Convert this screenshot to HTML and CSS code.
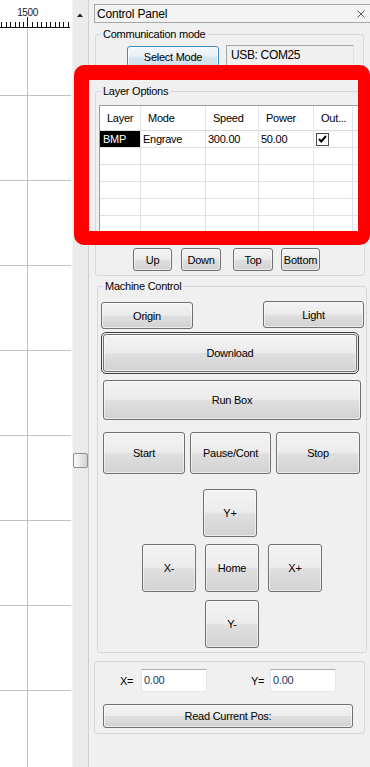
FILE: index.html
```html
<!DOCTYPE html>
<html>
<head>
<meta charset="utf-8">
<title>Control Panel</title>
<link rel="stylesheet" href="styles.css">
</head>
<body>
<div class="canvas">
  <svg width="72" height="767" viewBox="0 0 72 767">
    <g stroke="#c3c3c3" stroke-width="1">
      <path d="M27.5 28V767"/>
      <path d="M0 95.5H71M0 180.5H71M0 265.5H71M0 350.5H71M0 435.5H71M0 520.5H71M0 605.5H71M0 690.5H71"/>
    </g>
    <g stroke="#111" stroke-width="1">
      <path d="M0 27.5H70"/>
      <path d="M1.5 22V27M6.5 22V27M10.5 22V27M15.5 22V27M19.5 22V27M23.5 22V27M27.5 17V27M32.5 22V27M37.5 22V27M41.5 22V27M46.5 22V27M50.5 22V27M55.5 22V27M59.5 22V27M63.5 22V27M68.5 22V27"/>
    </g>
    <text x="27.5" y="16" class="ruler-label" text-anchor="middle">1500</text>
  </svg>
</div>
<div class="vscroll">
  <svg class="arrow-up" width="6" height="4" viewBox="0 0 6 4"><path d="M0 4L3 0.5L6 4Z" fill="#222"/></svg>
  <div class="thumb"></div>
</div>
<div class="panel">
  <div class="titlebar">
    <span>Control Panel</span>
    <svg width="8" height="8" viewBox="0 0 8 8"><path d="M0.5 0.5L7.5 7.5M7.5 0.5L0.5 7.5" stroke="#555" stroke-width="1"/></svg>
  </div>

  <fieldset class="group g-comm">
    <legend>Communication mode</legend>
    <div class="comm-row">
      <button class="btn btn-focus select-mode">Select Mode</button>
      <div class="port">USB: COM25</div>
    </div>
  </fieldset>

  <fieldset class="group g-layer">
    <legend>Layer Options</legend>
    <div class="grid-wrap">
      <div class="grid">
        <div class="cell hd">Layer</div>
        <div class="cell hd">Mode</div>
        <div class="cell hd">Speed</div>
        <div class="cell hd">Power</div>
        <div class="cell hd">Out...</div>
        <div class="cell hd last"></div>

        <div class="cell sel">BMP</div>
        <div class="cell">Engrave</div>
        <div class="cell">300.00</div>
        <div class="cell">50.00</div>
        <div class="cell"><span class="check"><svg width="11" height="11" viewBox="0 0 11 11"><path d="M2 5L4.3 7.5L9 2" stroke="#000" stroke-width="2" fill="none"/></svg></span></div>
        <div class="cell last"></div>

        <div class="cell"></div><div class="cell"></div><div class="cell"></div><div class="cell"></div><div class="cell"></div><div class="cell last"></div>
        <div class="cell"></div><div class="cell"></div><div class="cell"></div><div class="cell"></div><div class="cell"></div><div class="cell last"></div>
        <div class="cell"></div><div class="cell"></div><div class="cell"></div><div class="cell"></div><div class="cell"></div><div class="cell last"></div>
        <div class="cell"></div><div class="cell"></div><div class="cell"></div><div class="cell"></div><div class="cell"></div><div class="cell last"></div>
        <div class="cell"></div><div class="cell"></div><div class="cell"></div><div class="cell"></div><div class="cell"></div><div class="cell last"></div>
        <div class="cell"></div><div class="cell"></div><div class="cell"></div><div class="cell"></div><div class="cell"></div><div class="cell last"></div>
      </div>
    </div>
    <div class="order-row">
      <button class="btn b-up">Up</button>
      <button class="btn b-down">Down</button>
      <button class="btn b-top">Top</button>
      <button class="btn b-bottom">Bottom</button>
    </div>
  </fieldset>

  <fieldset class="group g-machine">
    <legend>Machine Control</legend>
    <div class="row-ol">
      <button class="btn b-origin">Origin</button>
      <button class="btn b-light">Light</button>
    </div>
    <button class="btn b-download">Download</button>
    <button class="btn b-runbox">Run Box</button>
    <div class="row-ssp">
      <button class="btn b-start">Start</button>
      <button class="btn b-pause">Pause/Cont</button>
      <button class="btn b-stop">Stop</button>
    </div>
    <div class="pad-row pad-top"><button class="btn pad b-yplus">Y+</button></div>
    <div class="pad-row pad-mid">
      <button class="btn pad">X-</button>
      <button class="btn pad">Home</button>
      <button class="btn pad">X+</button>
    </div>
    <div class="pad-row pad-bot"><button class="btn pad">Y-</button></div>
  </fieldset>

  <div class="group g-pos">
    <div class="pos-row">
      <span class="lbl lbl-x">X=</span>
      <div class="field">0.00</div>
      <span class="lbl lbl-y">Y=</span>
      <div class="field">0.00</div>
    </div>
    <button class="btn b-read">Read Current Pos:</button>
  </div>
</div>
<div class="highlight"></div>
</body>
</html>
```

FILE: styles.css
```css
* { box-sizing: border-box; }

html, body {
  margin: 0;
  padding: 0;
}

body {
  position: relative;
  width: 370px;
  height: 767px;
  overflow: hidden;
  display: flex;
  background: #f0f0f0;
  font-family: "Liberation Sans", Arial, sans-serif;
  font-size: 11px;
  letter-spacing: -0.25px;
  color: #000;
}

/* ---------- drawing canvas ---------- */
.canvas {
  width: 72px;
  flex: none;
  background: #fff;
}
.canvas svg { display: block; }
.ruler-label {
  font-family: "Liberation Sans", Arial, sans-serif;
  font-size: 10px;
  letter-spacing: -0.4px;
  fill: #222;
}

/* ---------- scrollbar ---------- */
.vscroll {
  width: 16px;
  flex: none;
  background: #ebebeb;
  border-left: 1px solid #f4f4f4;
  display: flex;
  flex-direction: column;
  padding-top: 13px;
}
.arrow-up {
  display: block;
  margin-left: 4px;
}
.thumb {
  margin-top: 436px;
  width: 15px;
  height: 15px;
  border: 1px solid #8f8f8f;
  border-radius: 2px;
  background: linear-gradient(90deg, #f8f8f8, #e6e6e6 55%, #d2d2d2);
}

/* ---------- panel ---------- */
.panel {
  flex: 1;
  border-left: 1px solid #cfcfcf;
  padding-top: 4px;
  display: flex;
  flex-direction: column;
}

.titlebar {
  margin-left: 5px;
  height: 19px;
  border: 1px solid #a7a7a7;
  background: #f3f3f3;
  display: flex;
  align-items: center;
  justify-content: space-between;
  padding: 0 5px 0 2px;
  font-size: 12px;
  letter-spacing: -0.2px;
}
.titlebar svg { display: block; }

/* group boxes */
.group {
  border: 1px solid #d3d9de;
  border-radius: 3px;
  padding: 0;
  min-width: 0;
}
.group legend {
  font-size: 11px;
  line-height: 14px;
  height: 14px;
  padding: 0 2px;
  margin-left: 5px;
}

.g-comm {
  margin: 4px 7px 0 6px;
  padding: 0 0 9px 0;
}
.comm-row {
  margin-top: 4px;
  padding-left: 31px;
  display: flex;
  align-items: flex-start;
}
.select-mode {
  margin-top: 1px;
  width: 92px;
  height: 21px;
}
.port {
  margin-left: 7px;
  width: 128px;
  height: 21px;
  border: 1px solid #a5a5a5;
  border-right-color: #e3e3e3;
  border-bottom-color: #e3e3e3;
  padding: 2px 0 0 4px;
  font-size: 12px;
  letter-spacing: -0.35px;
  line-height: 14px;
}

.g-layer {
  margin: 7px 6px 0 6px;
  padding: 0 0 4px 0;
}
.grid-wrap {
  margin: 7px 3px 0 3px;
  height: 134px;
  border: 1px solid #9a9a9a;
  border-right-color: #b8b8b8;
  background: #fff;
  overflow: hidden;
}
.grid {
  display: grid;
  grid-template-columns: 41px 65px 53px 55px 39px 1fr;
  grid-template-rows: 25px;
  grid-auto-rows: 17px;
}
.cell {
  border-right: 1px solid #e2e2e2;
  border-bottom: 1px solid #e2e2e2;
  padding-left: 2px;
  line-height: 16px;
  white-space: nowrap;
  overflow: hidden;
}
.cell.last { border-right: none; }
.cell.hd {
  height: 25px;
  line-height: 25px;
  padding-left: 7px;
  border-right-color: #e6e6e6;
  border-bottom-color: #dadada;
}
.cell.sel {
  background: #000;
  color: #fff;
  padding-left: 3px;
}
.check {
  display: flex;
  align-items: center;
  justify-content: center;
  width: 13px;
  height: 13px;
  margin-top: 2px;
  border: 1px solid #4a4a4a;
  background: #fff;
}
.check svg { display: block; }

.order-row {
  margin-top: 9px;
  padding-left: 37px;
  display: flex;
}
.order-row .btn { height: 23px; }
.b-up { width: 39px; }
.b-down { width: 40px; margin-left: 9px; }
.b-top { width: 40px; margin-left: 12px; }
.b-bottom { width: 39px; margin-left: 8px; }

/* machine control */
.g-machine {
  margin: 3px 4px 0 8px;
  padding: 0 0 4px 0;
  display: flex;
  flex-direction: column;
}
.row-ol {
  margin-top: 8px;
  padding: 0 2px 0 3px;
  display: flex;
  justify-content: space-between;
  align-items: flex-start;
}
.b-origin { width: 92px; height: 27px; margin-top: 1px; }
.b-light { width: 101px; height: 27px; }
.b-download {
  margin: 5px 0 0 5px;
  width: 254px;
  height: 38px;
  outline: 1px solid #3f3f3f;
  outline-offset: 1px;
}
.b-runbox {
  margin: 8px 0 0 5px;
  width: 258px;
  height: 40px;
}
.row-ssp {
  margin: 12px 0 0 5px;
  display: flex;
  gap: 5px;
}
.row-ssp .btn { height: 42px; }
.b-start { width: 82px; }
.b-pause { width: 81px; }
.b-stop { width: 84px; }

.pad-row {
  display: flex;
  justify-content: center;
  gap: 9px;
}
.pad-top { margin-top: 15px; }
.pad-mid { margin-top: 7px; }
.pad-bot { margin-top: 8px; }
.pad { width: 54px; height: 48px; }
.b-yplus { margin-right: 4px; }

/* position */
.g-pos {
  margin: 8px 6px 0 5px;
  padding: 7px 0 5px 0;
}
.pos-row {
  display: flex;
  align-items: center;
}
.lbl { display: block; }
.lbl-x { margin-left: 25px; width: 21px; }
.lbl-y { margin-left: 44px; width: 19px; }
.field {
  width: 66px;
  height: 23px;
  background: #fff;
  border: 1px solid #e2e7ec;
  border-top-color: #abadb3;
  padding: 3px 0 0 2px;
  line-height: 15px;
  color: #1b3561;
}
.b-read {
  margin: 12px 0 0 8px;
  width: 250px;
  height: 24px;
}

/* buttons */
.btn {
  display: flex;
  align-items: center;
  justify-content: center;
  padding: 0;
  font: inherit;
  letter-spacing: inherit;
  color: #000;
  border: 1px solid #707070;
  border-radius: 3px;
  background: linear-gradient(#f3f3f3, #ececec 48%, #dfdfdf 52%, #d2d2d2);
  box-shadow: inset 0 0 0 1px rgba(255, 255, 255, 0.55);
  flex: none;
}
.btn-focus {
  border-color: #3c8ec4;
  background: linear-gradient(#f2f7fa, #e9f1f6 48%, #d9e7f0 52%, #cfe1ec);
  box-shadow: inset 0 0 0 1px rgba(255, 255, 255, 0.8);
}

/* annotation overlay */
.highlight {
  position: absolute;
  left: 74px;
  top: 65px;
  width: 296px;
  height: 180px;
  border-style: solid;
  border-color: #ff0000;
  border-width: 15px 12px 14px 15px;
  border-radius: 10px;
  pointer-events: none;
}
```
